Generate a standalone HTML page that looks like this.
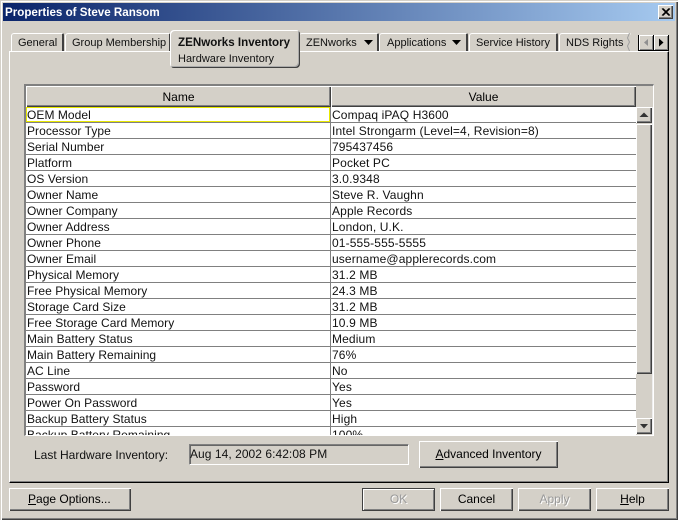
<!DOCTYPE html>
<html><head><meta charset="utf-8"><style>
html,body{margin:0;padding:0;background:#d4d0c8}
#w{position:relative;width:678px;height:520px;overflow:hidden;background:#d4d0c8;font:12px/16px "Liberation Sans",sans-serif;color:#000}
#w div,#w span.a{position:absolute;box-sizing:border-box}
.t{white-space:nowrap}
.b{background:#d4d0c8;text-align:center;box-shadow:inset 1px 1px 0 #fff,inset -1px -1px 0 #404040,inset -2px -2px 0 #808080}
.tab{background:#d4d0c8;border-top:1px solid #fff;border-left:1px solid #fff;border-right:2px solid #404040;border-top-left-radius:3px;border-top-right-radius:2px;top:33px;height:18px;line-height:19px;white-space:nowrap;color:#111;font-size:11px}
.r{left:0;width:610px;height:16px;border-bottom:1px solid #808080;background:#fff}
.r i{position:absolute;font-style:normal;top:1px;line-height:15px;white-space:nowrap;color:#111}
.n{left:1px;letter-spacing:.05px}.v{left:306px;letter-spacing:.13px}
.r b{position:absolute;left:304px;top:0;width:1px;height:16px;background:#808080}
u{text-underline-offset:1px}
</style></head><body><div id="w">
<div style="left:0;top:0;width:678px;height:520px;box-shadow:inset 1px 1px 0 #d4d0c8,inset 2px 2px 0 #fff,inset -1px -1px 0 #404040,inset -2px -2px 0 #808080"></div>
<div class="t" style="left:3px;top:3px;width:672px;height:18px;background:linear-gradient(90deg,#0a246a,#a6caf0);color:#fff;font-weight:bold;font-size:11.6px;padding-left:2px;line-height:20px">Properties of Steve Ransom</div>
<div class="b" style="left:658px;top:5px;width:15px;height:14px"><svg width="15" height="14" style="position:absolute;left:0;top:0"><path d="M4 3.500l7 7M5 3.500l7 7M11 3.500l-7 7M12 3.500l-7 7" stroke="#000" fill="none"/></svg></div>

<!-- panel -->
<div style="left:9px;top:51px;width:660px;height:432px;border-top:1px solid #fff;border-left:1px solid #fff;border-right:1px solid #000;border-bottom:1px solid #000;box-shadow:inset -1px -1px 0 #808080"></div>

<!-- tabs -->
<div class="tab" style="left:11px;width:53px;padding-left:6px">General</div>
<div class="tab" style="left:65px;width:106px;padding-left:6px">Group Membership</div>
<div class="tab" style="left:299px;width:80px;padding-left:7px;border-left:0">ZENworks</div>
<svg style="position:absolute;left:364px;top:40px" width="10" height="6"><path d="M0 0h9L4.500 5z" fill="#000"/></svg>
<div class="tab" style="left:379px;width:89px;padding-left:7px">Applications</div>
<svg style="position:absolute;left:452px;top:40px" width="10" height="6"><path d="M0 0h9L4.500 5z" fill="#000"/></svg>
<div class="tab" style="left:469px;width:89px;padding-left:6px">Service History</div>
<div class="tab" style="left:559px;width:72px;padding-left:6px;border-right:0">NDS Rights</div>
<svg style="position:absolute;left:626px;top:33px" width="6" height="18"><path d="M3.500 0L1.500 5L3.500 9L1.500 13L3.500 18" stroke="#a0a0a0" fill="none"/></svg>
<div style="left:170px;top:30px;width:130px;height:38px;background:#d4d0c8;border-radius:4px;box-shadow:inset 1px 1px 0 #fff,inset -1px -1px 0 #404040,inset -2px -2px 0 #aaa"></div>
<div class="t" style="left:178px;top:35px;font-weight:bold;font-size:11.6px;color:#111">ZENworks Inventory</div>
<div class="t" style="left:178px;top:51px;font-size:11px;color:#111">Hardware Inventory</div>

<!-- tab scroll buttons -->
<div style="left:638px;top:35px;width:31px;height:16px;background:#000"></div>
<div class="b" style="left:639px;top:35px;width:14px;height:15px;box-shadow:inset 1px 1px 0 #fff,inset -1px -1px 0 #808080"><svg width="14" height="15" style="position:absolute;left:0;top:0"><path d="M9 4v7L5 7.500z" fill="#909090"/></svg></div>
<div class="b" style="left:654px;top:35px;width:14px;height:15px;box-shadow:inset 1px 1px 0 #fff,inset -1px -1px 0 #808080"><svg width="14" height="15" style="position:absolute;left:0;top:0"><path d="M5 3.500v8L9.500 7.500z" fill="#000"/></svg></div>

<!-- table frame -->
<div style="left:24px;top:84px;width:630px;height:352px;border-top:2px solid #808080;border-left:2px solid #808080;border-right:1px solid #fff;border-bottom:1px solid #fff;background:#d4d0c8"></div>
<div class="b" style="left:26px;top:86px;width:305px;height:21px;line-height:22px">Name</div>
<div class="b" style="left:331px;top:86px;width:305px;height:21px;line-height:22px">Value</div>
<div style="left:25px;top:107px;width:611px;height:328px;overflow:hidden;border-left:1px solid #808080">
<div class="r" style="top:0"><i class="n">OEM Model</i><b></b><i class="v">Compaq iPAQ H3600</i><div style="left:0;top:0;width:304px;height:15px;border:1px solid #e8e800"></div></div>
<div class="r" style="top:16px"><i class="n">Processor Type</i><b></b><i class="v">Intel Strongarm (Level=4, Revision=8)</i></div>
<div class="r" style="top:32px"><i class="n">Serial Number</i><b></b><i class="v">795437456</i></div>
<div class="r" style="top:48px"><i class="n">Platform</i><b></b><i class="v">Pocket PC</i></div>
<div class="r" style="top:64px"><i class="n">OS Version</i><b></b><i class="v">3.0.9348</i></div>
<div class="r" style="top:80px"><i class="n">Owner Name</i><b></b><i class="v">Steve R. Vaughn</i></div>
<div class="r" style="top:96px"><i class="n">Owner Company</i><b></b><i class="v">Apple Records</i></div>
<div class="r" style="top:112px"><i class="n">Owner Address</i><b></b><i class="v">London, U.K.</i></div>
<div class="r" style="top:128px"><i class="n">Owner Phone</i><b></b><i class="v">01-555-555-5555</i></div>
<div class="r" style="top:144px"><i class="n">Owner Email</i><b></b><i class="v">username@applerecords.com</i></div>
<div class="r" style="top:160px"><i class="n">Physical Memory</i><b></b><i class="v">31.2 MB</i></div>
<div class="r" style="top:176px"><i class="n">Free Physical Memory</i><b></b><i class="v">24.3 MB</i></div>
<div class="r" style="top:192px"><i class="n">Storage Card Size</i><b></b><i class="v">31.2 MB</i></div>
<div class="r" style="top:208px"><i class="n">Free Storage Card Memory</i><b></b><i class="v">10.9 MB</i></div>
<div class="r" style="top:224px"><i class="n">Main Battery Status</i><b></b><i class="v">Medium</i></div>
<div class="r" style="top:240px"><i class="n">Main Battery Remaining</i><b></b><i class="v">76%</i></div>
<div class="r" style="top:256px"><i class="n">AC Line</i><b></b><i class="v">No</i></div>
<div class="r" style="top:272px"><i class="n">Password</i><b></b><i class="v">Yes</i></div>
<div class="r" style="top:288px"><i class="n">Power On Password</i><b></b><i class="v">Yes</i></div>
<div class="r" style="top:304px"><i class="n">Backup Battery Status</i><b></b><i class="v">High</i></div>
<div class="r" style="top:320px"><i class="n">Backup Battery Remaining</i><b></b><i class="v">100%</i></div>
</div>

<!-- scrollbar -->
<div style="left:636px;top:107px;width:17px;height:328px;background:#d4d0c8;border-right:1px solid #eee"></div>
<div class="b" style="left:636px;top:107px;width:16px;height:16px"><svg width="16" height="16" style="position:absolute;left:0;top:0"><path d="M3.500 10h9L8 5.500z" fill="#333"/></svg></div>
<div class="b" style="left:636px;top:124px;width:16px;height:250px"></div>
<div class="b" style="left:636px;top:418px;width:16px;height:16px"><svg width="16" height="16" style="position:absolute;left:0;top:0"><path d="M4 6h8L8 10.500z" fill="#333"/></svg></div>

<!-- bottom of panel -->
<div class="t" style="left:34px;top:447px;color:#111">Last Hardware Inventory:</div>
<div class="t" style="left:189px;top:444px;width:220px;height:21px;border-top:1px solid #808080;border-left:1px solid #808080;border-right:1px solid #fff;border-bottom:1px solid #fff;box-shadow:inset 1px 1px 0 #666;padding-left:0;line-height:18px;color:#111;letter-spacing:.05px">Aug 14, 2002 6:42:08 PM</div>
<div class="b t" style="left:419px;top:441px;width:139px;height:27px;line-height:27px"><u>A</u>dvanced Inventory</div>

<!-- buttons -->
<div class="b t" style="left:9px;top:488px;width:122px;height:23px;line-height:23px;text-align:left;padding-left:19px"><u>P</u>age Options...</div>
<div class="b" style="left:362px;top:488px;width:73px;height:23px;line-height:23px;color:#999;text-shadow:1px 1px 0 #fff;box-shadow:inset 1px 1px 0 #404040,inset -1px -1px 0 #404040,inset 2px 2px 0 #fff,inset -2px -2px 0 #808080">OK</div>
<div class="b" style="left:440px;top:488px;width:73px;height:23px;line-height:23px">Cancel</div>
<div class="b" style="left:518px;top:488px;width:73px;height:23px;line-height:23px;color:#999;text-shadow:1px 1px 0 #fff">Apply</div>
<div class="b" style="left:596px;top:488px;width:73px;height:23px;line-height:23px"><u>H</u>elp</div>
</div></body></html>
